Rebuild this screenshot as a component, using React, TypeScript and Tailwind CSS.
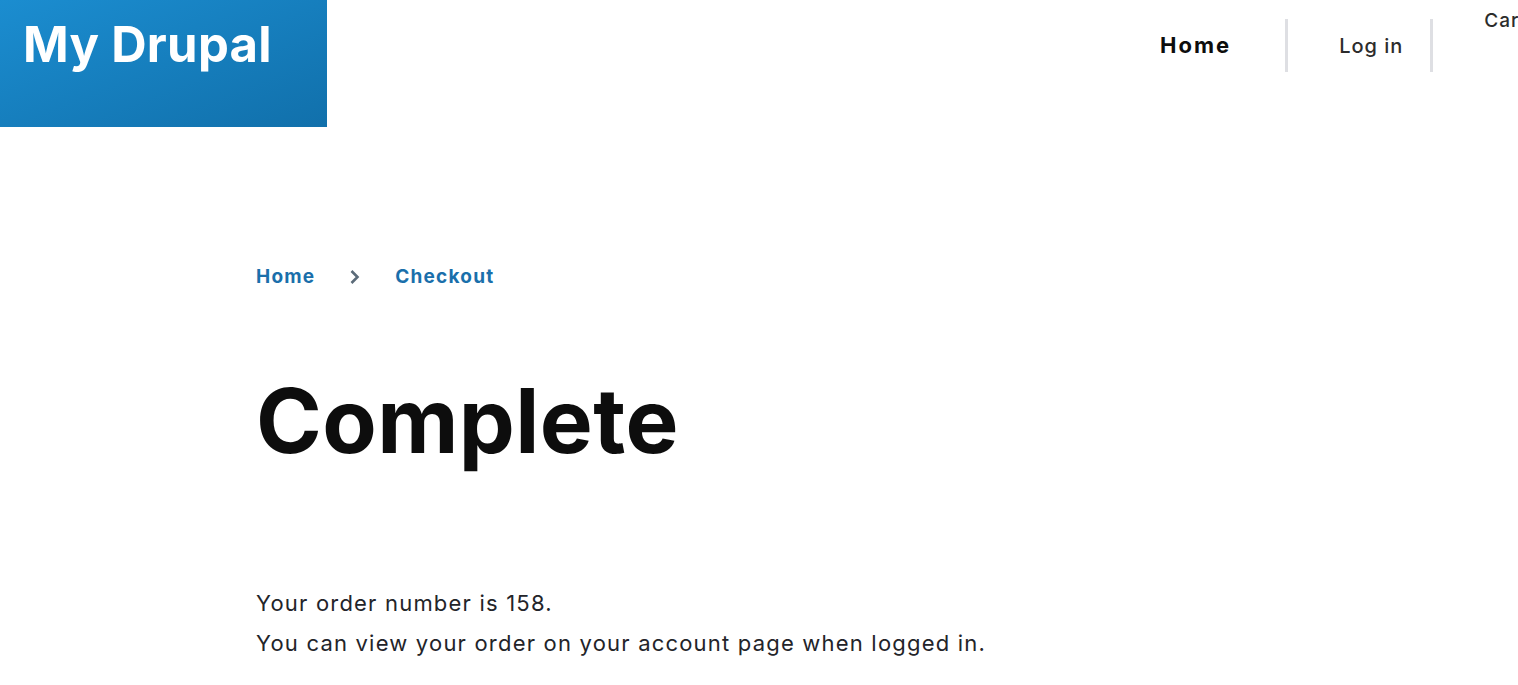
import React from 'react';

const font = { fontFamily: 'Inter, "Noto Sans", sans-serif' };

const Header: React.FC = () => (
  <header className="flex items-start overflow-hidden">
    <div className="w-[327px] h-[127px] shrink-0 bg-gradient-to-br from-[#1b8dd0] to-[#1170ab] pl-[23px] pt-[17px]">
      <a href="#" className="text-white font-bold text-[49px] tracking-[0.3px] leading-[56px] whitespace-nowrap">My Drupal</a>
    </div>
    <nav className="flex items-start h-[72px] ml-[833px] shrink-0 whitespace-nowrap">
      <a href="#" className="mt-[19px] h-[53px] flex items-center text-[22px] tracking-[2px] font-bold text-[#0d0d0d]">Home</a>
      <span className="mt-[19px] h-[53px] w-[3px] bg-[#dedfe3] ml-[54px]" />
      <a href="#" className="ml-[51px] mt-[19px] h-[53px] flex items-center text-[20px] tracking-[1px] font-medium text-[#2c2c2c]">Log in</a>
      <span className="mt-[19px] h-[53px] w-[3px] bg-[#dedfe3] ml-[27px]" />
      <a href="#" className="ml-[51px] mt-[9px] text-[19px] tracking-[1px] font-medium text-[#2c2c2c] leading-[24px]">Cart</a>
    </nav>
  </header>
);

export default function App() {
  return (
    <div className="w-full min-h-[685px] overflow-hidden bg-white" style={font}>
      <Header />
      <main className="pl-[256px]">
        <nav className="mt-[138px] flex items-center text-[19px] tracking-[1.2px] font-bold text-[#1a6fab] leading-[24px]">
          <a href="#">Home</a>
          <svg className="ml-[34px] mr-[34px]" width="12" height="16" viewBox="0 0 12 16" fill="none">
            <path d="M2.5 2 L8.5 8 L2.5 14" stroke="#5b6b79" strokeWidth="2.6" />
          </svg>
          <a href="#">Checkout</a>
        </nav>
        <h1 className="mt-[82px] text-[89px] tracking-[0.4px] leading-[100px] font-bold text-[#0d0d0d]">Complete</h1>
        <div className="mt-[112px] text-[22px] tracking-[1.2px] leading-[40px] text-[#232429]">
          <p>Your order number is 158.</p>
          <p>You can view your order on your account page when logged in.</p>
        </div>
      </main>
    </div>
  );
}
